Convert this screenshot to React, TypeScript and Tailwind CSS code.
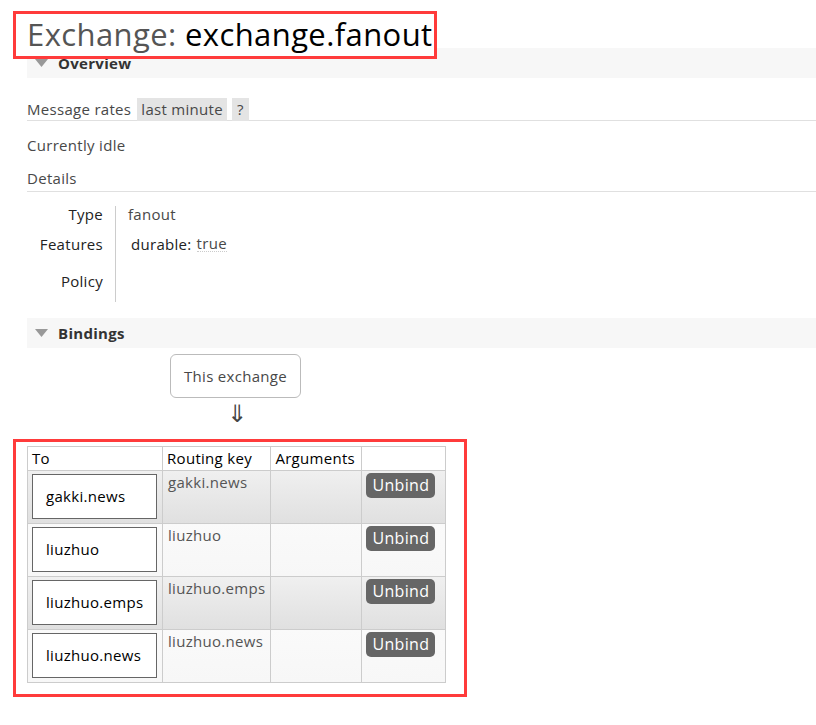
import React from "react";

const rows = ["gakki.news", "liuzhuo", "liuzhuo.emps", "liuzhuo.news"];

function Tri() {
  return (
    <svg width="13" height="8" viewBox="0 0 13 8" className="shrink-0">
      <polygon points="0,0 13,0 6.5,8" fill="#999" />
    </svg>
  );
}

export default function App() {
  return (
    <div
      className="w-[816px] h-[725px] bg-white overflow-hidden text-[#484848] text-[15px] tracking-[0.3px]"
      style={{ fontFamily: '"Open Sans", "Noto Sans", sans-serif' }}
    >
      <div className="relative pt-[48px]">
        <div className="absolute left-[13px] top-[11px] w-[424px] h-[48px] border-[3px] border-[#ff3b3b] bg-white z-10 flex items-center pl-[11px]">
          <span className="text-[31px] leading-none tracking-[0.4px] text-[#555] -mt-[2px]">
            Exchange: <span className="text-black">exchange.fanout</span>
          </span>
        </div>
        <div className="ml-[27px] h-[30px] bg-[#f7f7f7] flex items-center pl-[8px] gap-[10px]">
          <Tri />
          <span className="font-bold text-[15px] text-[#333]">Overview</span>
        </div>
      </div>

      <div className="ml-[27px]">
        <div className="mt-[20px] h-[23px] flex items-center border-b border-[#e0e0e0] pb-0">
          <span>Message rates</span>
          <span className="ml-[6px] bg-[#e4e4e4] px-[4px] h-[23px] flex items-center">last minute</span>
          <span className="ml-[5px] bg-[#e4e4e4] px-[5px] h-[23px] flex items-center">?</span>
        </div>
        <div className="mt-[13px] h-[22px] flex items-center">Currently idle</div>
        <div className="mt-[11px] h-[22px] flex items-center border-b border-[#e0e0e0] pb-[2px] box-content">Details</div>

        <div className="mt-[14px] flex">
          <div className="w-[76px] flex flex-col items-end text-[#222] leading-none">
            <div className="h-[18px] flex items-center -mt-[1px]">Type</div>
            <div className="h-[18px] flex items-center mt-[12px]">Features</div>
            <div className="h-[18px] flex items-center mt-[19px]">Policy</div>
          </div>
          <div className="ml-[12px] w-px h-[96px] bg-[#ccc]" />
          <div className="ml-[12px] flex flex-col leading-none">
            <div className="h-[18px] flex items-center -mt-[1px]">fanout</div>
            <div className="h-[18px] flex items-center mt-[12px] ml-[3px]">
              <span className="text-[#222]">durable:</span>
              <span className="ml-[5px] border-b border-dotted border-[#ccc]">true</span>
            </div>
          </div>
        </div>

        <div className="mt-[16px] h-[30px] bg-[#f7f7f7] flex items-center pl-[8px] gap-[10px]">
          <Tri />
          <span className="font-bold text-[15px] text-[#333]">Bindings</span>
        </div>

        <div className="ml-[143px] mt-[6px] w-[131px] h-[44px] border border-[#bbb] rounded-[6px] flex items-center justify-center">
          This exchange
        </div>
        <div className="ml-[200px] mt-[2px] h-[28px] flex items-center text-[24px] text-[#444]" style={{ fontFamily: '"DejaVu Sans", sans-serif' }}>
          ⇓
        </div>
      </div>

      <div className="ml-[13px] mt-[11px] w-[454px] h-[258px] border-[3px] border-[#ff3b3b] pt-[4px] pl-[11px]">
        <table className="border-collapse text-[15px]">
          <thead>
            <tr className="h-[22px] text-black">
              <th className="border border-[#ccc] font-normal text-left px-[4px] w-[135px] align-middle">To</th>
              <th className="border border-[#ccc] font-normal text-left px-[4px] w-[108px]">Routing key</th>
              <th className="border border-[#ccc] font-normal text-left px-[4px] w-[91px]">Arguments</th>
              <th className="border border-[#ccc] w-[84px]"></th>
            </tr>
          </thead>
          <tbody>
            {rows.map((r, i) => (
              <tr
                key={r}
                className={
                  "h-[53px] " +
                  (i % 2 === 0
                    ? "bg-gradient-to-b from-[#f0f0f0] to-[#e0e0e0]"
                    : "bg-gradient-to-b from-[#fafafa] to-[#f7f7f7]")
                }
              >
                <td className="border border-[#ccc] px-[4px] align-middle">
                  <div className="w-[125px] h-[45px] border border-[#666] bg-white flex items-center pl-[13px] text-black">
                    {r}
                  </div>
                </td>
                <td className="border border-[#ccc] px-[5px] align-top pt-0 text-[#555]">{r}</td>
                <td className="border border-[#ccc]"></td>
                <td className="border border-[#ccc] align-top pt-[2px] pl-[4px]">
                  <span className="inline-flex items-center justify-center w-[69px] h-[25px] bg-[#666] text-white text-[16px] rounded-[5px]">
                    Unbind
                  </span>
                </td>
              </tr>
            ))}
          </tbody>
        </table>
      </div>
    </div>
  );
}
